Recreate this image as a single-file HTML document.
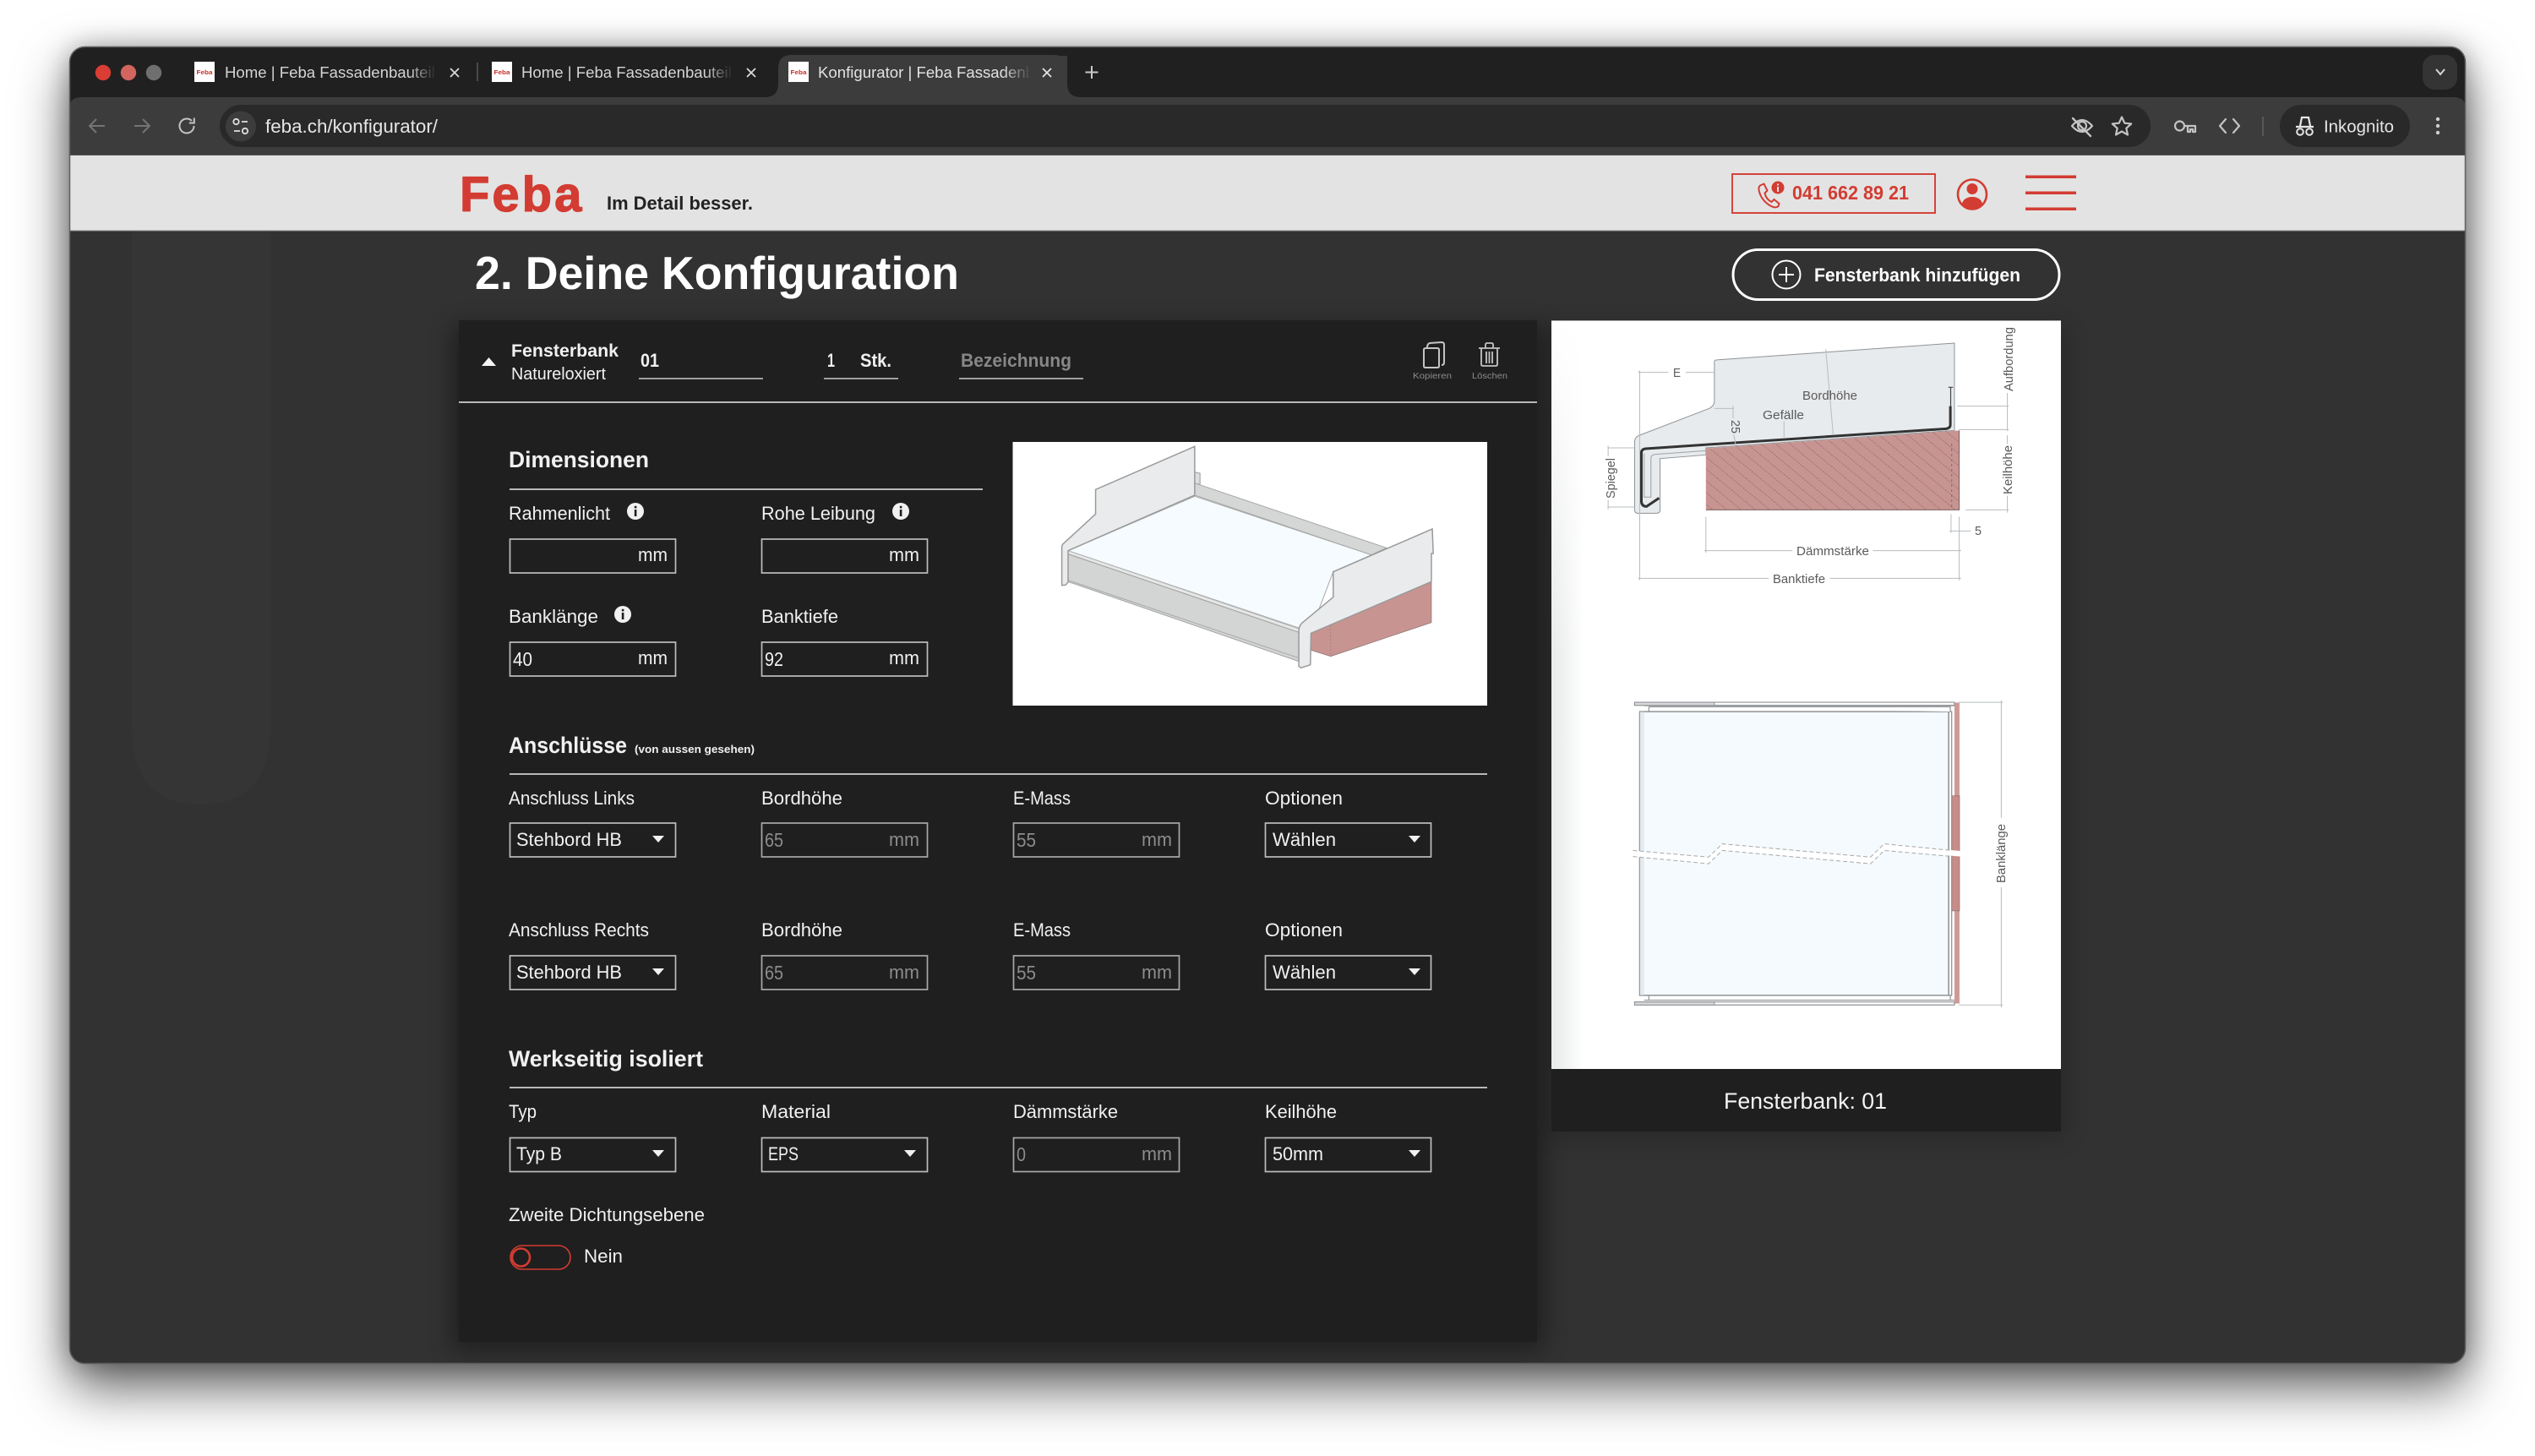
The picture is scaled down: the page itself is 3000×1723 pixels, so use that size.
<!DOCTYPE html>
<html lang="de"><head><meta charset="utf-8"><title>Konfigurator | Feba Fassadenbauteile</title>
<style>
html,body{margin:0;padding:0;background:#fff;width:3000px;height:1723px;overflow:hidden}
#shadow{position:absolute;left:82px;top:55px;width:2836px;height:1559px;border-radius:18px;box-shadow:0 28px 62px rgba(0,0,0,.62),0 0 30px rgba(0,0,0,.28)}
svg{position:absolute;left:0;top:0;display:block}
text{font-family:"Liberation Sans",sans-serif;fill:#f1f1f1;font-size:22px}
.b{font-weight:700}
.t{font-size:18.6px;fill:#d4d4d4}
.g{fill:#8c8c8c}
.v{font-size:23px}
.d{font-size:14.5px;fill:#5a5a5a}
.box{fill:none;stroke:#bdbdbd;stroke-width:1.7}
.dis{stroke:#a8a8a8}
.ln{stroke:#cfcfcf;stroke-width:1.8}
.ul{stroke:#a0a0a0;stroke-width:2}
.ns *{vector-effect:non-scaling-stroke}
.dim{stroke:#b7bcc0;stroke-width:1;fill:none}
.ic{fill:none;stroke:#c4c4c4;stroke-width:2.2;stroke-linecap:round;stroke-linejoin:round}
</style></head><body>
<div id="shadow"></div>
<svg width="3000" height="1723" viewBox="0 0 3000 1723" xmlns="http://www.w3.org/2000/svg">
<defs>
<clipPath id="win"><rect x="82" y="55" width="2836" height="1559" rx="18"/></clipPath>
<clipPath id="t3"><rect x="960" y="66" width="262" height="44"/></clipPath>
<linearGradient id="fade" x1="0" x2="1" y1="0" y2="0"><stop offset="0" stop-color="#202020" stop-opacity="0"/><stop offset="1" stop-color="#202020"/></linearGradient>
<linearGradient id="fadeA" x1="0" x2="1" y1="0" y2="0"><stop offset="0" stop-color="#3c3c3c" stop-opacity="0"/><stop offset="1" stop-color="#3c3c3c"/></linearGradient>
<linearGradient id="band" x1="0" x2="1" y1="0" y2="0"><stop offset="0" stop-color="#e9eaeb"/><stop offset=".3" stop-color="#eeefef"/><stop offset="1" stop-color="#fff"/></linearGradient>
<linearGradient id="bandV" x1="0" x2="0" y1="0" y2="1"><stop offset="0" stop-color="#fff"/><stop offset=".45" stop-color="#fff" stop-opacity="0"/></linearGradient>
<pattern id="hatch" width="42" height="42" patternUnits="userSpaceOnUse"><path d="M0 0L42 42" stroke="#8a6a68" stroke-width="2.500" stroke-dasharray="4 4"/></pattern>
<filter id="blur" x="-10%" y="-10%" width="120%" height="120%"><feGaussianBlur stdDeviation="14"/></filter>
</defs>

<g clip-path="url(#win)">
<!-- tab strip -->
<rect x="82" y="55" width="2836" height="70" fill="#202020"/>
<circle cx="122" cy="86" r="9.2" fill="#d93d33"/><circle cx="152" cy="86" r="9.2" fill="#d2655e"/><circle cx="182" cy="86" r="9.2" fill="#6f6f6f"/>

<rect x="230" y="73" width="24" height="24" fill="#fff"/>
<text x="232.5" y="88" style="font-size:7.5px;fill:#c8322a;font-weight:700" textLength="19" lengthAdjust="spacingAndGlyphs">Feba</text>
<text class="t" x="266" y="92">Home | Feba Fassadenbauteile</text>
<rect x="484" y="66" width="32" height="40" fill="url(#fade)"/><rect x="516" y="66" width="38" height="40" fill="#202020"/>
<path d="M533 81l10 10M543 81l-10 10" stroke="#d8d8d8" stroke-width="1.8"/>
<rect x="564" y="74" width="2" height="22" fill="#4a4a4a"/>

<rect x="582" y="73" width="24" height="24" fill="#fff"/>
<text x="584.5" y="88" style="font-size:7.5px;fill:#c8322a;font-weight:700" textLength="19" lengthAdjust="spacingAndGlyphs">Feba</text>
<text class="t" x="617" y="92">Home | Feba Fassadenbauteile</text>
<rect x="835" y="66" width="32" height="40" fill="url(#fade)"/><rect x="867" y="66" width="38" height="40" fill="#202020"/>
<path d="M884 81l10 10M894 81l-10 10" stroke="#d8d8d8" stroke-width="1.8"/>

<path d="M905 115q16 0 16-16V81q0-16 16-16H1247q16 0 16 16V99q0 16 16 16z" fill="#3c3c3c"/>
<rect x="933" y="73" width="24" height="24" fill="#fff"/>
<text x="935.5" y="88" style="font-size:7.5px;fill:#c8322a;font-weight:700" textLength="19" lengthAdjust="spacingAndGlyphs">Feba</text>
<g clip-path="url(#t3)"><text class="t" x="968" y="92" style="fill:#e2e2e2">Konfigurator | Feba Fassadenbauteile</text></g>
<rect x="1186" y="66" width="34" height="40" fill="url(#fadeA)"/><rect x="1220" y="66" width="43" height="45" fill="#3c3c3c"/>
<path d="M1234 81l10 10M1244 81l-10 10" stroke="#e4e4e4" stroke-width="1.8"/>
<path d="M1292 78v15M1284.5 85.500h15" stroke="#c9c9c9" stroke-width="2"/>

<rect x="2867" y="65" width="41" height="41" rx="14" fill="#343434"/>
<path d="M2883 82l5 6 5-6" fill="none" stroke="#d6d6d6" stroke-width="2"/>

<!-- toolbar -->
<path d="M82 129q0-14 14-14H2904q14 0 14 14V184H82z" fill="#3c3c3c"/>
<path d="M124 149H107M114 141l-8 8 8 8" fill="none" stroke="#747474" stroke-width="2"/>
<path d="M159 149H176M169 141l8 8-8 8" fill="none" stroke="#747474" stroke-width="2"/>
<path d="M229.500 149a8.500 8.500 0 1 1-2.600-6.100M229.800 139.500v6h-6" fill="none" stroke="#c4c4c4" stroke-width="2"/>
<rect x="260" y="124" width="2285" height="50" rx="25" fill="#292929"/>
<circle cx="285" cy="149.500" r="18" fill="#3c3c3c"/>
<circle cx="279.500" cy="144" r="3.200" fill="none" stroke="#dedede" stroke-width="1.800"/><path d="M286 144h7M277 155h7" stroke="#dedede" stroke-width="1.800"/><circle cx="290" cy="155" r="3.200" fill="none" stroke="#dedede" stroke-width="1.800"/>
<text x="314" y="157" style="fill:#e6e6e6" textLength="204" lengthAdjust="spacingAndGlyphs">feba.ch/konfigurator/</text>

<g class="ic">
<path d="M2452 149q12-14 24 0q-12 14-24 0z"/><circle cx="2464" cy="149" r="5"/>
<path d="M2453 140l21 21" stroke-width="2.400"/>
<path d="M2511 138.500l3.300 7.200 7.900.8-5.900 5.300 1.700 7.700-7-4-7 4 1.700-7.700-5.900-5.300 7.900-.8z"/>
<circle cx="2579.500" cy="149" r="5.500"/><path d="M2585 149h13v7h-3v-3h-3v3h-3v-6"/>
<path d="M2634 141l-7 8 7 8M2643 141l7 8-7 8"/>
</g>
<rect x="2677" y="138" width="2" height="23" fill="#585858"/>
<rect x="2698" y="124" width="154" height="50" rx="25" fill="#292929"/>
<path d="M2717 150h21M2722 149l2-10h8l2 10" fill="none" stroke="#e6e6e6" stroke-width="2.200"/><circle cx="2722" cy="156" r="3.800" fill="none" stroke="#e6e6e6" stroke-width="2"/><circle cx="2733" cy="156" r="3.800" fill="none" stroke="#e6e6e6" stroke-width="2"/>
<text x="2750" y="156.500" style="font-size:20px;fill:#e6e6e6" textLength="83" lengthAdjust="spacingAndGlyphs">Inkognito</text>
<circle cx="2885" cy="141" r="2.200" fill="#d0d0d0"/><circle cx="2885" cy="149" r="2.200" fill="#d0d0d0"/><circle cx="2885" cy="157" r="2.200" fill="#d0d0d0"/>
<rect x="82" y="183.500" width="2836" height="1" fill="#707070"/>

<!-- page -->
<rect x="82" y="184" width="2836" height="1431" fill="#323232"/>
<path d="M156 273H320V860q0 92-82 92t-82-92z" fill="#353535"/>
<rect x="82" y="184" width="2836" height="89" fill="#e3e3e3"/>
<rect x="82" y="272.500" width="2836" height="1" fill="#8a8a8a"/>

<text class="b" x="544" y="250" style="font-size:58px;fill:#d33c32;stroke:#d33c32;stroke-width:1.200;stroke-linejoin:round;letter-spacing:3px">Feba</text>
<text class="b" x="718" y="248" style="fill:#222" textLength="173" lengthAdjust="spacingAndGlyphs">Im Detail besser.</text>

<rect x="2050" y="206" width="240" height="46" fill="none" stroke="#d33c32" stroke-width="1.900"/>
<path d="M2083 219.500l4.500-2 4 8-3 3c1 5 4 8.500 8 10.500l3-3 6 5-1 3.200c-3 2-5.500 1-8 0-8-4-13.500-11-15-19.500-.3-2 .4-4.200 1.500-5.200z" fill="none" stroke="#d33c32" stroke-width="2"/>
<circle cx="2104" cy="222" r="7.500" fill="#d33c32"/><rect x="2103" y="221" width="2" height="6" fill="#e3e3e3"/><rect x="2103" y="217.500" width="2" height="2" fill="#e3e3e3"/>
<text class="b" x="2121" y="236" style="font-size:23px;fill:#d33c32" textLength="138" lengthAdjust="spacingAndGlyphs">041 662 89 21</text>
<ellipse cx="2334" cy="230" rx="17" ry="17.500" fill="none" stroke="#d33c32" stroke-width="2.600"/>
<circle cx="2334" cy="223.500" r="6.500" fill="#d33c32"/>
<path d="M2322 241c1-5 6-8 12-8s11 3 12 8c-3 4-7 6.500-12 6.500s-9-2.500-12-6.500z" fill="#d33c32"/>
<g fill="#d33c32"><rect x="2397" y="207.500" width="60" height="3.500"/><rect x="2397" y="226.500" width="60" height="3.500"/><rect x="2397" y="245.500" width="60" height="3.500"/></g>

<text class="b" x="562" y="342" style="font-size:55px;fill:#fff" textLength="573" lengthAdjust="spacingAndGlyphs">2. Deine Konfiguration</text>

<rect x="2051" y="295.500" width="386" height="59" rx="29.500" fill="none" stroke="#fff" stroke-width="3"/>
<circle cx="2114" cy="325" r="16.500" fill="none" stroke="#fff" stroke-width="2"/><path d="M2114 316v18M2105 325h18" stroke="#fff" stroke-width="2"/>
<text class="b" x="2147" y="333" style="fill:#fff" textLength="244" lengthAdjust="spacingAndGlyphs">Fensterbank hinzufügen</text>

<!-- panel shadows -->
<rect x="535" y="385" width="1292" height="1212" fill="#000" opacity=".38" filter="url(#blur)"/>
<rect x="1830" y="385" width="615" height="960" fill="#000" opacity=".2" filter="url(#blur)"/>

<!-- left panel -->
<rect x="543" y="379" width="1276" height="1209" fill="#1f1f1f"/>
<path d="M570 433h17l-8.500-10z" fill="#f4f4f4"/>
<text class="b" x="605" y="422" style="font-size:21px" textLength="127" lengthAdjust="spacingAndGlyphs">Fensterbank</text>
<text x="605" y="449" style="font-size:20px" textLength="112" lengthAdjust="spacingAndGlyphs">Natureloxiert</text>
<text class="b" x="758" y="434" textLength="22" lengthAdjust="spacingAndGlyphs">01</text>
<path class="ul" d="M756 448H903M975 448H1063M1135 448H1282"/>
<text class="b" x="979" y="434" textLength="9" lengthAdjust="spacingAndGlyphs">1</text>
<text class="b" x="1018" y="434" textLength="37" lengthAdjust="spacingAndGlyphs">Stk.</text>
<text class="b g" x="1137" y="434" style="fill:#878787" textLength="131" lengthAdjust="spacingAndGlyphs">Bezeichnung</text>
<path d="M1685 414q0-2 2-2h14q2 0 2 2v19q0 2-2 2h-14q-2 0-2-2zM1689 411q0-4 3-5l14-1q3 0 3 3v21q0 3-3 3" fill="#1f1f1f" stroke="#c4c4c4" stroke-width="2"/>
<path d="M1750 412h25M1758 412v-4q0-2 2-2h5q2 0 2 2v4M1753 412v19q0 2 2 2h15q2 0 2-2v-19M1759 416v14M1762.500 416v14M1766 416v14" fill="none" stroke="#c4c4c4" stroke-width="1.800"/>
<text x="1672" y="448" style="font-size:10.500px;fill:#8c8c8c" textLength="46" lengthAdjust="spacingAndGlyphs">Kopieren</text>
<text x="1742" y="448" style="font-size:10.500px;fill:#8c8c8c" textLength="42" lengthAdjust="spacingAndGlyphs">Löschen</text>
<path class="ln" d="M543 476H1819"/>

<text class="b" x="602" y="553" style="font-size:27px" textLength="166" lengthAdjust="spacingAndGlyphs">Dimensionen</text>
<path class="ln" d="M603 579H1163"/>
<text x="602" y="615" textLength="120" lengthAdjust="spacingAndGlyphs">Rahmenlicht</text>
<circle cx="752" cy="605" r="10" fill="#f1f1f1"/><rect x="750.800" y="603" width="2.600" height="8" fill="#1f1f1f"/><rect x="750.800" y="598.800" width="2.600" height="2.600" fill="#1f1f1f"/>
<text x="901" y="615" textLength="135" lengthAdjust="spacingAndGlyphs">Rohe Leibung</text>
<circle cx="1066" cy="605" r="10" fill="#f1f1f1"/><rect x="1064.800" y="603" width="2.600" height="8" fill="#1f1f1f"/><rect x="1064.800" y="598.800" width="2.600" height="2.600" fill="#1f1f1f"/>
<rect class="box" x="603.500" y="638" width="196" height="40"/><rect class="box" x="901.500" y="638" width="196" height="40"/>
<text x="755" y="664" textLength="35" lengthAdjust="spacingAndGlyphs">mm</text><text x="1052" y="664" textLength="36" lengthAdjust="spacingAndGlyphs">mm</text>

<text x="602" y="737" textLength="106" lengthAdjust="spacingAndGlyphs">Banklänge</text>
<circle cx="737" cy="727" r="10" fill="#f1f1f1"/><rect x="735.800" y="725" width="2.600" height="8" fill="#1f1f1f"/><rect x="735.800" y="720.800" width="2.600" height="2.600" fill="#1f1f1f"/>
<text x="901" y="737" textLength="91" lengthAdjust="spacingAndGlyphs">Banktiefe</text>
<rect class="box" x="603.500" y="760" width="196" height="40"/><rect class="box" x="901.500" y="760" width="196" height="40"/>
<text class="v" x="607" y="788" textLength="23" lengthAdjust="spacingAndGlyphs">40</text><text x="755" y="786" textLength="35" lengthAdjust="spacingAndGlyphs">mm</text>
<text class="v" x="905" y="788" textLength="22" lengthAdjust="spacingAndGlyphs">92</text><text x="1052" y="786" textLength="36" lengthAdjust="spacingAndGlyphs">mm</text>

<!-- preview -->
<rect x="1198.500" y="523" width="561.500" height="312" fill="#fff"/>
<g class="ns" transform="translate(1190,510) scale(.37,.33333)">
<path d="M600 145L622 150V190L600 185z" fill="#dcdddd" stroke="#9a9a9a" stroke-width="1"/>
<path d="M605 185L1218 415L1170 440L605 228z" fill="#d5d6d6" stroke="#a5a5a5" stroke-width="1"/>
<path d="M605 232L1170 440L1048 500L1000 640L940 700L200 425z" fill="#f5fbfe" stroke="#a8a8a8" stroke-width="1"/>
<path d="M200 425L938 702V715L200 437z" fill="#e6e7e7" stroke="#b5b5b5" stroke-width="1"/>
<path d="M200 437L938 715V818L200 535z" fill="#d3d4d4" stroke="#a0a0a0" stroke-width="1"/>
<path d="M200 530L938 806" fill="none" stroke="#a8a8a8" stroke-width="1"/>
<path d="M605 55L288 208V295L185 400Q180 405 180 412V548L192 547L200 537V425L605 228z" fill="#e9ebec" stroke="#9a9a9a" stroke-width="1.500"/>
<path d="M977 718L1362 535V680L1040 800L977 778z" fill="#c89491" stroke="#8f7a79" stroke-width=".8"/>
<path d="M1040 690V800" stroke="#9c7c7a" stroke-width=".8" stroke-dasharray="2 2"/>
<path d="M1365 348L1048 500V590L950 680Q938 692 938 710V835L945 841L975 830L977 718L1362 535V435H1368z" fill="#e9ebec" stroke="#9a9a9a" stroke-width="1.500"/>
</g>

<!-- Anschluesse -->
<text class="b" x="602" y="891" style="font-size:27px" textLength="140" lengthAdjust="spacingAndGlyphs">Anschlüsse</text>
<text class="b" x="751" y="891" style="font-size:12.500px" textLength="142" lengthAdjust="spacingAndGlyphs">(von aussen gesehen)</text>
<path class="ln" d="M603 916H1760"/>
<text x="602" y="952" textLength="149" lengthAdjust="spacingAndGlyphs">Anschluss Links</text>
<text x="901" y="952" textLength="96" lengthAdjust="spacingAndGlyphs">Bordhöhe</text>
<text x="1199" y="952" textLength="68" lengthAdjust="spacingAndGlyphs">E-Mass</text>
<text x="1497" y="952" textLength="92" lengthAdjust="spacingAndGlyphs">Optionen</text>
<rect class="box" x="603.500" y="974" width="196" height="40"/><rect class="box dis" x="901.500" y="974" width="196" height="40"/><rect class="box dis" x="1199.500" y="974" width="196" height="40"/><rect class="box" x="1497.500" y="974" width="196" height="40"/>
<text x="611" y="1001" textLength="125" lengthAdjust="spacingAndGlyphs">Stehbord HB</text><path d="M772 989H786L779 997z" fill="#f1f1f1"/>
<text class="g v" x="905" y="1002" textLength="22" lengthAdjust="spacingAndGlyphs">65</text><text class="g" x="1052" y="1001" textLength="36" lengthAdjust="spacingAndGlyphs">mm</text>
<text class="g v" x="1203" y="1002" textLength="23" lengthAdjust="spacingAndGlyphs">55</text><text class="g" x="1351" y="1001" textLength="36" lengthAdjust="spacingAndGlyphs">mm</text>
<text x="1506" y="1001" textLength="75" lengthAdjust="spacingAndGlyphs">Wählen</text><path d="M1667 989H1681L1674 997z" fill="#f1f1f1"/>

<text x="602" y="1108" textLength="166" lengthAdjust="spacingAndGlyphs">Anschluss Rechts</text>
<text x="901" y="1108" textLength="96" lengthAdjust="spacingAndGlyphs">Bordhöhe</text>
<text x="1199" y="1108" textLength="68" lengthAdjust="spacingAndGlyphs">E-Mass</text>
<text x="1497" y="1108" textLength="92" lengthAdjust="spacingAndGlyphs">Optionen</text>
<rect class="box" x="603.500" y="1131" width="196" height="40"/><rect class="box dis" x="901.500" y="1131" width="196" height="40"/><rect class="box dis" x="1199.500" y="1131" width="196" height="40"/><rect class="box" x="1497.500" y="1131" width="196" height="40"/>
<text x="611" y="1158" textLength="125" lengthAdjust="spacingAndGlyphs">Stehbord HB</text><path d="M772 1146H786L779 1154z" fill="#f1f1f1"/>
<text class="g v" x="905" y="1159" textLength="22" lengthAdjust="spacingAndGlyphs">65</text><text class="g" x="1052" y="1158" textLength="36" lengthAdjust="spacingAndGlyphs">mm</text>
<text class="g v" x="1203" y="1159" textLength="23" lengthAdjust="spacingAndGlyphs">55</text><text class="g" x="1351" y="1158" textLength="36" lengthAdjust="spacingAndGlyphs">mm</text>
<text x="1506" y="1158" textLength="75" lengthAdjust="spacingAndGlyphs">Wählen</text><path d="M1667 1146H1681L1674 1154z" fill="#f1f1f1"/>

<!-- Werkseitig -->
<text class="b" x="602" y="1262" style="font-size:27px" textLength="230" lengthAdjust="spacingAndGlyphs">Werkseitig isoliert</text>
<path class="ln" d="M603 1287H1760"/>
<text x="602" y="1323" textLength="33" lengthAdjust="spacingAndGlyphs">Typ</text>
<text x="901" y="1323" textLength="82" lengthAdjust="spacingAndGlyphs">Material</text>
<text x="1199" y="1323" textLength="124" lengthAdjust="spacingAndGlyphs">Dämmstärke</text>
<text x="1497" y="1323" textLength="85" lengthAdjust="spacingAndGlyphs">Keilhöhe</text>
<rect class="box" x="603.500" y="1346.500" width="196" height="40"/><rect class="box" x="901.500" y="1346.500" width="196" height="40"/><rect class="box dis" x="1199.500" y="1346.500" width="196" height="40"/><rect class="box" x="1497.500" y="1346.500" width="196" height="40"/>
<text x="611" y="1373" textLength="54" lengthAdjust="spacingAndGlyphs">Typ B</text><path d="M772 1361H786L779 1369z" fill="#f1f1f1"/>
<text x="909" y="1373" textLength="36" lengthAdjust="spacingAndGlyphs">EPS</text><path d="M1070 1361H1084L1077 1369z" fill="#f1f1f1"/>
<text class="g v" x="1203" y="1374" textLength="11" lengthAdjust="spacingAndGlyphs">0</text><text class="g" x="1351" y="1373" textLength="36" lengthAdjust="spacingAndGlyphs">mm</text>
<text x="1506" y="1373" textLength="60" lengthAdjust="spacingAndGlyphs">50mm</text><path d="M1667 1361H1681L1674 1369z" fill="#f1f1f1"/>
<text x="602" y="1445" textLength="232" lengthAdjust="spacingAndGlyphs">Zweite Dichtungsebene</text>
<rect x="604" y="1474" width="71" height="28" rx="14" fill="none" stroke="#d33c32" stroke-width="1.600"/>
<circle cx="616.500" cy="1488" r="10.500" fill="none" stroke="#d33c32" stroke-width="2.600"/>
<text x="691" y="1494" textLength="46" lengthAdjust="spacingAndGlyphs">Nein</text>

<!-- right panel -->
<rect x="1836" y="379" width="603" height="886" fill="#fff"/>
<rect x="1836" y="379" width="603" height="1" fill="#aaa"/>
<rect x="1836" y="380" width="38" height="885" fill="url(#band)"/>
<rect x="1836" y="380" width="38" height="885" fill="url(#bandV)"/>
<rect x="1836" y="1265" width="603" height="74" fill="#1f1f1f"/>
<text x="2040" y="1312" style="font-size:27px;fill:#f4f4f4" textLength="193" lengthAdjust="spacingAndGlyphs">Fensterbank: 01</text>

<!-- section drawing -->
<g class="ns" transform="translate(1830,370) scale(.40177,.33333)">
<path d="M500 168L1202 108V418L470 480V505L335 518V700Q335 712 325 712H270Q260 712 260 700V455Q262 440 275 435L480 340Q495 330 495 315V175Q495 168 500 168z" fill="#e8ebed" stroke="#8f9295" stroke-width="1"/>
<path d="M470 482L1216 418V700H470z" fill="#c89491"/>
<path d="M470 482L1216 418V700H470z" fill="url(#hatch)" style="vector-effect:none"/>
<path d="M470 700H1216V418" fill="none" stroke="#77605f" stroke-width="1"/>
<path d="M1194 465V700" stroke="#8a6a68" stroke-width="1" stroke-dasharray="3 3"/>
<path d="M470 490L320 503Q308 505 308 518V655H288V500" fill="none" stroke="#a7aaad" stroke-width="1.200"/>
<path d="M1190 332V398Q1190 410 1178 412L292 483Q280 485 280 497V672Q282 688 295 688L332 658" fill="none" stroke="#333" stroke-width="3"/>
<path d="M1191 265V332M1184 265H1198" fill="none" stroke="#444" stroke-width="1.200"/>
<g class="dim">
<path d="M275 205V950M270 212H360M410 212H497"/>
<path d="M180 480H260M180 690H260M182 472V510M182 665V698"/>
<path d="M1210 332H1362M1215 415H1362M1235 700H1362M1358 285V420M1358 435V465M1358 650V710"/>
<path d="M1192 715V782M1216 725V950M1188 775H1250"/>
<path d="M470 725V852M465 845H725M962 845H1222"/>
<path d="M270 943H655M835 943H1222"/>
<path d="M823 130L845 435M700 385V442M495 340H552M550 330V375M552 432L557 465"/>
</g>
</g>
<text class="d" x="2133" y="473" textLength="65" lengthAdjust="spacingAndGlyphs">Bordhöhe</text>
<text class="d" x="2086" y="496" textLength="49" lengthAdjust="spacingAndGlyphs">Gefälle</text>
<text class="d" x="1980" y="446" textLength="9" lengthAdjust="spacingAndGlyphs">E</text>
<text class="d" transform="translate(2049,497) rotate(90)" textLength="16" lengthAdjust="spacingAndGlyphs">25</text>
<text class="d" transform="translate(1911,590) rotate(-90)" textLength="48" lengthAdjust="spacingAndGlyphs">Spiegel</text>
<text class="d" transform="translate(2382,463) rotate(-90)" textLength="76" lengthAdjust="spacingAndGlyphs">Aufbordung</text>
<text class="d" transform="translate(2381,585) rotate(-90)" textLength="58" lengthAdjust="spacingAndGlyphs">Keilhöhe</text>
<text class="d" x="2337" y="633" textLength="8" lengthAdjust="spacingAndGlyphs">5</text>
<text class="d" x="2126" y="657" textLength="86" lengthAdjust="spacingAndGlyphs">Dämmstärke</text>
<text class="d" x="2098" y="690" textLength="62" lengthAdjust="spacingAndGlyphs">Banktiefe</text>

<!-- plan drawing -->
<g class="ns" transform="translate(1830,800) scale(.40177,.35714)">
<rect x="1202" y="88" width="15" height="997" fill="#cf9a96"/>
<rect x="1193" y="397" width="24" height="381" fill="#c98c88" stroke="#8d7472" stroke-width=".8"/>
<rect x="1185" y="118" width="9" height="940" fill="#fff" stroke="#8a8a8a" stroke-width="1.200"/>
<rect x="275" y="118" width="910" height="940" fill="#f4fafd" stroke="#8f9295" stroke-width="1.500"/>
<rect x="276" y="119" width="12" height="938" fill="#e4eaee"/>
<path d="M260 87H1202V97H260zM288 98H1202M302 102H1190V118M302 102V118" fill="#fff" stroke="#8f9295" stroke-width="1.200"/>
<rect x="260" y="87" width="235" height="10" fill="#d9dadb" stroke="#8f9295" stroke-width="1"/>
<path d="M260 1080H1202V1090H260zM288 1074H1202M302 1074V1058M1190 1058V1074" fill="#fff" stroke="#8f9295" stroke-width="1.200"/>
<rect x="260" y="1080" width="235" height="10" fill="#d9dadb" stroke="#8f9295" stroke-width="1"/>
<path d="M255 578L478 600L518 556L955 600L995 556L1222 580V598L995 578L955 622L518 578L478 622L255 598z" fill="#fff"/>
<path d="M255 578L478 600L518 556L955 600L995 556L1195 578M255 598L478 622L518 578L955 622L995 578L1195 598" fill="none" stroke="#a8a8a8" stroke-width="1" stroke-dasharray="5 3"/>
<path class="dim" d="M1215 87H1345M1215 1090H1345M1340 80V470M1340 700V1098"/>
</g>
<text class="d" transform="translate(2373,1045) rotate(-90)" textLength="70" lengthAdjust="spacingAndGlyphs">Banklänge</text>
</g>
<rect x="82.500" y="55.500" width="2835" height="1558" rx="18" fill="none" stroke="#5f5f5f" stroke-width="1.500"/>
</svg>
</body></html>
